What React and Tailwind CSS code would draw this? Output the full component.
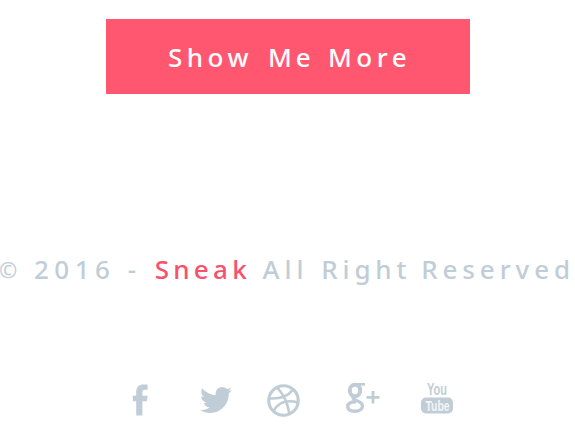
import React from 'react';
import { FaTwitter } from 'react-icons/fa';

function Facebook() {
  return (
    <svg viewBox="0 0 17 32" className="ml-[132px] h-8 w-[17px]" fill="currentColor">
      <path d="M4.200 31.500V17.200H.800v-5.400h3.400V8.200C4.200 3 6.800.400 11.500.400c2 0 3.500.200 4.100.400v5h-2.800c-1.900 0-2.400 1-2.400 2.600v3.400h5.200l-.700 5.400h-4.500V31.500Z" />
    </svg>
  );
}

function Dribbble() {
  return (
    <svg viewBox="0 0 32 32" className="ml-[35px] h-[33px] w-[33px]" fill="none" stroke="currentColor" strokeWidth="2.600">
      <circle cx="16" cy="16" r="14.300" strokeWidth="3" />
      <path d="M10 3.500C16 10 20 18 21.600 28.500M2 14c9 .500 18-1.500 23-8.500M6.500 26c4-7.500 12-11.500 23.500-8" />
    </svg>
  );
}

function GooglePlus() {
  return (
    <svg viewBox="0 0 34 32" className="ml-[46px] -mt-0.5 h-8 w-[34px]" fill="none" stroke="currentColor">
      <ellipse cx="9" cy="8.500" rx="5.200" ry="5.700" strokeWidth="4" />
      <path d="M9 2.300h10" strokeWidth="2.600" />
      <path d="M12.500 3c2.500 2 3 7.500 0 10" strokeWidth="3" />
      <path d="M8 14.500c-2 2 0 3 2.500 4 3.800 1.400 6 2.600 6 5.500 0 3.200-3.500 5.200-7.800 5.200s-7-1.800-7-4.600c0-3.300 3.600-4.900 8.300-4.900" strokeWidth="3.400" />
      <path d="M27 9v12.500M20.500 15.300h13" strokeWidth="2.800" />
    </svg>
  );
}

function Youtube() {
  return (
    <svg viewBox="0 0 34 34" className="ml-10 -mt-1 h-[34px] w-[34px] overflow-visible" fill="currentColor" fontFamily="'Liberation Sans', sans-serif">
      <text x="7" y="14.500" fontSize="16.500" fontWeight="700" textLength="20" lengthAdjust="spacingAndGlyphs">You</text>
      <rect x="1" y="17.500" width="32" height="16" rx="5" />
      <text x="5.500" y="30.500" fontSize="14" fontWeight="700" fill="#f0f5f8" textLength="24" lengthAdjust="spacingAndGlyphs">Tube</text>
    </svg>
  );
}

export default function App() {
  return (
    <main className="h-[427px] w-[575px] overflow-hidden bg-white pt-[19px] font-['Noto_Sans',sans-serif] text-[26px] font-medium leading-[36px]">
      <button className="ml-[106px] flex h-[75px] w-[364px] items-center bg-[#ff5770] pl-[62px] text-white">
        <span className="w-[100px] whitespace-nowrap text-left tracking-[4.500px]">Show</span>
        <span className="w-[60px] whitespace-nowrap text-left tracking-[4px]">Me</span>
        <span className="whitespace-nowrap text-left tracking-[4.500px]">More</span>
      </button>
      <footer className="mt-[157px] text-[#c1cdd6]">
        <p className="flex whitespace-nowrap">
          <span className="-ml-px w-[35px] text-[22px] font-normal">©</span>
          <span className="w-[94px] tracking-[5.500px]">2016</span>
          <span className="w-[27px]">-</span>
          <span className="w-[108px] tracking-[4.300px] text-[#f9516c]">Sneak</span>
          <span className="w-[59px] tracking-[5px]">All</span>
          <span className="w-[100px] tracking-[4.800px]">Right</span>
          <span className="tracking-[4.900px]">Reserved</span>
        </p>
        <div className="mt-[97px] flex items-start">
          <Facebook />
          <FaTwitter className="ml-[51px] h-8 w-8" />
          <Dribbble />
          <GooglePlus />
          <Youtube />
        </div>
      </footer>
    </main>
  );
}
